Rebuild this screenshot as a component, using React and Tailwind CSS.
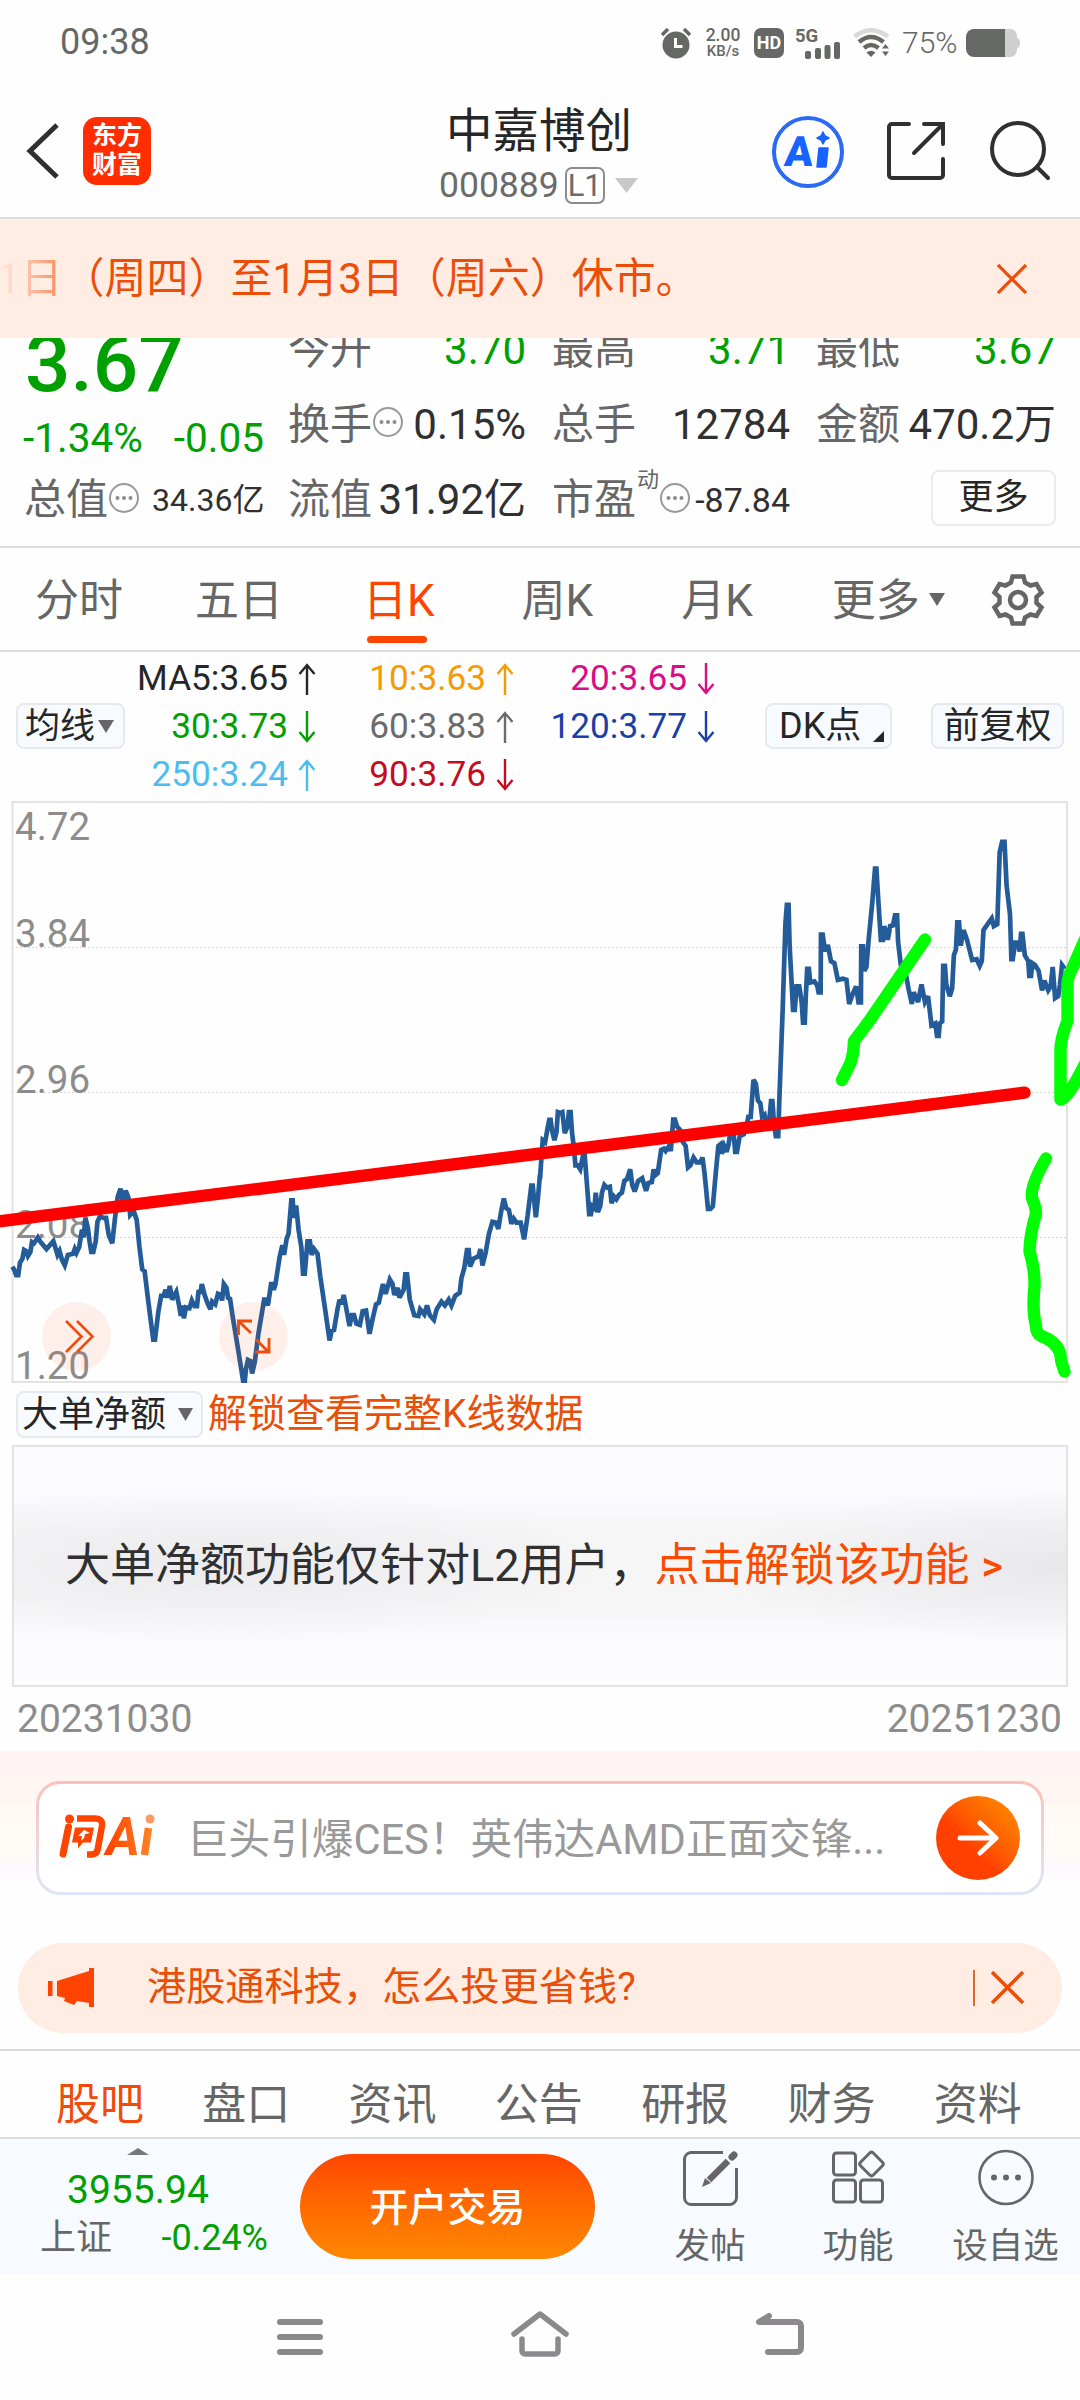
import React from 'react';

const quotes = [
    { label: '今开', value: '3.70', tone: 'text-[#00a000]' },
    { label: '最高', value: '3.71', tone: 'text-[#00a000]' },
    { label: '最低', value: '3.67', tone: 'text-[#00a000]' },
    { label: '换手', value: '0.15%', tone: 'text-[#303030]', hint: true },
    { label: '总手', value: '12784', tone: 'text-[#303030]' },
    { label: '金额', value: '470.2万', tone: 'text-[#303030]' },
    { label: '流值', value: '31.92亿', tone: 'text-[#303030]' }
];

const periods = [
    { label: '分时', space: 'ml-[35px]' },
    { label: '五日', space: 'ml-[72px]' },
    { label: '日K', space: 'ml-[80px]', active: true },
    { label: '周K', space: 'ml-[87px]' },
    { label: '月K', space: 'ml-[88px]' },
    { label: '更多', space: 'ml-[79px]' }
];

const averages = [
    { text: 'MA5:3.65', up: true, color: 'text-[#262626]' },
    { text: '10:3.63', up: true, color: 'text-[#f59a00]' },
    { text: '20:3.65', up: false, color: 'text-[#d90d86]' },
    { text: '30:3.73', up: false, color: 'text-[#00a000]' },
    { text: '60:3.83', up: true, color: 'text-[#6b6b6b]' },
    { text: '120:3.77', up: false, color: 'text-[#1a3fa8]' },
    { text: '250:3.24', up: true, color: 'text-[#4cbcf0]' },
    { text: '90:3.76', up: false, color: 'text-[#c60a20]' }
];

const axis = [
    { text: '4.72', y: 50 },
    { text: '3.84', y: 157 },
    { text: '2.96', y: 303 },
    { text: '2.08', y: 448 },
    { text: '1.20', y: 589 }
];

const sections = ['股吧', '盘口', '资讯', '公告', '研报', '财务', '资料'];

// Price line, first and second half of the period
const firstHalf = '36,1225 42,1235 47,1247 53,1247 58,1215 65,1205 70,1182 76,1185 81,1198 88,1188 93,1162 99,1165 110,1150 118,1162 135,1180 145,1170 155,1160 162,1180 167,1195 173,1185 180,1208 188,1222 197,1195 212,1192 217,1180 222,1190 230,1175 238,1130 243,1150 248,1100 255,1125 260,1160 265,1187 271,1187 278,1160 283,1110 291,1095 300,1100 308,1100 316,1145 326,1165 334,1100 342,1045 350,1025 358,1065 365,1030 373,1048 378,1092 388,1082 397,1105 405,1175 413,1232 420,1237 430,1310 445,1413 450,1413 460,1340 468,1300 475,1300 481,1285 487,1305 493,1275 500,1310 512,1290 520,1325 525,1352 529,1325 534,1358 540,1330 550,1332 557,1312 565,1327 572,1327 577,1285 582,1295 586,1270 595,1300 603,1320 611,1335 616,1315 625,1322 633,1295 640,1298 645,1312 650,1270 658,1280 662,1305 668,1308 675,1350 690,1430 706,1518 711,1518 714,1490 720,1465 727,1468 732,1500 740,1470 750,1400 767,1310 773,1310 778,1325 788,1265 795,1285 800,1270 812,1200 820,1170 825,1195 832,1155 838,1140 846,1055 850,1055 853,1100 860,1068 867,1130 875,1175 880,1243 885,1243 890,1190 893,1160 900,1160 905,1195 912,1180 922,1192 930,1250 945,1340 957,1415 963,1390 970,1388 980,1335 986,1310 992,1322 998,1298 1005,1330 1015,1378 1022,1350 1028,1350 1035,1372 1045,1375 1053,1340 1063,1338 1073,1398 1082,1360 1092,1322 1100,1318 1112,1270 1120,1295 1132,1258 1140,1270 1145,1298 1155,1280 1160,1305 1172,1285 1177,1245 1182,1245 1190,1310 1203,1350 1215,1352 1220,1335 1232,1348 1240,1325 1248,1350 1260,1362 1268,1335 1282,1315 1292,1325 1303,1310 1311,1325 1322,1300 1335,1292 1340,1255 1348,1230 1356,1183 1361,1183 1365,1225 1375,1205 1390,1198 1395,1180 1401,1222 1410,1190 1420,1140 1430,1110 1440,1112 1447,1128 1455,1085 1463,1050 1470,1075 1478,1080 1485,1115 1492,1102 1500,1112 1512,1112 1522,1155 1532,1095 1543,1017 1547,1017 1556,1098 1562,1050 1568,990';
const secondHalf = '0,1000 8,900 15,905 22,870 27,848 31,848 35,875 42,900 48,880 52,828 60,830 65,828 72,882 80,865 84,828 89,828 93,880 98,915 103,965 110,965 117,975 125,940 130,940 137,1020 143,1090 148,1090 152,1070 158,1075 162,1035 168,1085 175,1070 180,1035 187,1015 195,1022 203,1020 208,1062 215,1045 222,1052 230,1040 238,1035 245,1005 253,1000 262,975 268,1015 275,1032 285,1005 297,998 308,1030 315,1010 325,1008 330,975 335,990 342,985 352,925 360,922 365,928 375,915 380,928 387,847 392,847 398,865 408,875 415,905 423,915 430,970 437,965 446,945 455,957 465,957 472,945 478,985 488,1077 495,1077 502,1070 510,990 518,915 525,910 528,935 535,915 542,930 548,910 556,860 563,890 567,930 572,930 580,890 592,885 600,865 605,840 612,840 620,745 627,755 633,798 640,805 645,840 652,835 658,860 665,860 671,800 675,800 680,860 685,890 692,890 695,800 705,560 713,340 717,295 722,295 725,400 735,565 740,565 745,505 753,505 760,545 764,598 769,598 772,530 776,460 781,460 785,495 797,492 805,502 809,520 815,520 816,372 821,372 828,415 836,398 845,440 855,445 865,488 880,485 890,488 898,550 908,525 918,505 925,546 932,546 933,402 938,402 942,465 948,455 955,380 965,290 973,202 977,202 983,290 990,385 996,385 1000,350 1010,385 1017,350 1025,348 1031,322 1037,322 1040,390 1048,450 1060,460 1070,510 1080,550 1085,520 1098,545 1108,500 1118,545 1127,530 1137,605 1148,600 1153,632 1158,632 1161,600 1168,595 1171,452 1176,452 1180,500 1190,530 1197,510 1202,425 1208,410 1212,340 1217,340 1222,400 1230,360 1240,385 1255,437 1268,435 1277,452 1283,440 1288,360 1300,345 1312,330 1318,350 1328,345 1335,160 1342,133 1349,133 1355,245 1365,320 1369,435 1373,435 1380,392 1388,392 1393,415 1397,370 1401,370 1408,425 1418,440 1421,478 1426,478 1430,445 1438,450 1448,465 1458,515 1465,490 1476,515 1483,505 1489,455 1496,535 1505,530 1510,500 1516,450 1524,460';

const Arrow = ({ up }) => (
    <svg width="18" height="34" viewBox="0 0 18 34" fill="none" stroke="currentColor" strokeWidth="2.4" className={up ? '' : 'rotate-180'}>
        <path d="M9 33V3M1.5 12L9 3l7.500 9" />
    </svg>
);

const Triangle = ({ className }) => (
    <svg width="16" height="13" viewBox="0 0 16 13" preserveAspectRatio="none" className={className} fill="currentColor">
        <path d="M0 0h16L8 13z" />
    </svg>
);

const Hint = ({ className = '' }) => (
    <svg width="32" height="32" viewBox="0 0 32 32" fill="none" className={`shrink-0 ${className}`}>
        <circle cx="16" cy="16" r="14" stroke="#999" strokeWidth="2" />
        <g fill="#8c8c8c">
            <circle cx="9.500" cy="16" r="2" />
            <circle cx="16" cy="16" r="2" />
            <circle cx="22.500" cy="16" r="2" />
        </g>
    </svg>
);

const Cross = ({ size }) => (
    <svg width={size} height={size} viewBox="0 0 32 32" fill="none" stroke="#ec4e0a" strokeWidth="3.400">
        <path d="M1 1l30 30M31 1L1 31" />
    </svg>
);

const StatusBar = () => (
    <div className="h-[84px] pl-[60px] pr-[60px] flex items-center justify-between text-[#666865]">
        <span className="text-[36px] leading-none">09:38</span>
        <div className="flex items-center h-9 mt-[2px]">
            <svg width="30" height="32" viewBox="0 0 30 32" fill="none">
                <circle cx="15" cy="18" r="13.500" fill="#666865" />
                <path d="M1 8l6-6M29 8l-6-6" stroke="#666865" strokeWidth="3.500" />
                <path d="M14.500 11v8.500h7" stroke="#fff" strokeWidth="3" />
            </svg>
            <div className="ml-[13px] w-[38px] text-[17.500px] leading-[16px] font-medium text-center">
                <div>2.00</div>
                <div className="text-[15px]">KB/s</div>
            </div>
            <div className="ml-3 w-[30px] h-[30px] rounded-[7px] bg-[#666865] text-white text-[18px] font-bold leading-[30px] text-center">HD</div>
            <svg width="46" height="32" viewBox="0 0 46 32" className="ml-[11px] overflow-visible" fill="#666865">
                <text x="0" y="14.500" fontSize="18.500" fontWeight="700">5G</text>
                <rect x="10" y="24" width="6" height="8" rx="2" />
                <rect x="20" y="21" width="6" height="11" rx="2" />
                <rect x="29.500" y="18" width="6" height="14" rx="2" />
                <rect x="39" y="15" width="6" height="17" rx="2" />
            </svg>
            <svg width="38" height="30" viewBox="0 0 38 30" fill="none" className="ml-[12px]">
                <path d="M1.500 8.500Q18 -4 35 8.500" stroke="#d9d9d9" strokeWidth="4.500" />
                <path d="M6 14Q18 4 30.500 14" stroke="#666865" strokeWidth="4.500" />
                <path d="M11 20Q18 14 25.500 20" stroke="#666865" strokeWidth="4.500" />
                <path d="M13.500 24.500Q18 21 22.500 24.500L18 29z" fill="#666865" />
                <path d="M29 20.500l3.500-4.500 3.500 4.500zM29 23.500l3.500 4.500 3.500-4.500z" fill="#666865" />
            </svg>
            <span className="ml-[11px] w-[58px] text-[30px] leading-none font-light">75%</span>
            <svg width="54" height="28" viewBox="0 0 54 28" className="ml-[6px]">
                <path d="M8 0h37a7 7 0 0 1 6 7v2q3 0 3 5t-3 5v2a7 7 0 0 1-6 7H8z" fill="#cfcfcf" />
                <path d="M39 0H8a8 8 0 0 0-8 8v12a8 8 0 0 0 8 8h31z" fill="#666865" />
            </svg>
        </div>
    </div>
);

const Header = () => (
    <header className="h-[135px] border-b-2 border-[#dcdcdc] flex items-start">
        <svg width="33" height="56" viewBox="0 0 33 56" fill="none" stroke="#303030" strokeWidth="5" className="ml-[26px] mt-[39px]">
            <path d="M31 2L4 28l27 26" />
        </svg>
        <div className="ml-[24px] mt-[33px] w-[68px] h-[68px] rounded-[14px] bg-[#ff2d00] text-white text-[25px] leading-[29px] font-bold text-center pt-[4px]">
            <div>东方</div>
            <div>财富</div>
        </div>
        <div className="ml-[288px] mt-[24px] w-[200px]">
            <div className="text-[46.500px] leading-none text-[#262626] pl-[7px] whitespace-nowrap">中嘉博创</div>
            <div className="mt-[12.500px] flex items-center text-[35.500px] leading-none text-[#6b6b6b]">
                <span className="mr-[6px]">000889</span>
                <span className="w-[40px] h-[37px] rounded-[7px] border-2 border-[#8c8c8c] text-[31px] flex items-center justify-center shrink-0">L1</span>
                <Triangle className="ml-[10px] w-[23px] h-[15px] shrink-0 text-[#c8c8c8]" />
            </div>
        </div>
        <svg width="74" height="74" viewBox="0 0 74 74" className="ml-[132px] mt-[31px]">
            <circle cx="37" cy="37" r="34" fill="none" stroke="#2a6af5" strokeWidth="4" />
            <text x="13" y="51" fontSize="42" fontWeight="900" fill="#1763ff" transform="skewX(-5) translate(4 0)">A</text>
            <path d="M48 33h9l-2 19h-9zM52 17l2 4 4 2-4 2-2 4-2-4-4-2 4-2z" fill="#1763ff" stroke="#1763ff" strokeWidth="1.500" strokeLinejoin="round" />
        </svg>
        <svg width="60" height="60" viewBox="0 0 60 60" fill="none" stroke="#303030" strokeWidth="4" strokeLinecap="round" className="ml-[41px] mt-[37px]">
            <path d="M23 3H6a3 3 0 0 0-3 3v48a3 3 0 0 0 3 3h48a3 3 0 0 0 3-3V38M38 3h19v20M57 3L28 32" />
        </svg>
        <svg width="62" height="62" viewBox="0 0 62 62" fill="none" stroke="#303030" strokeWidth="4" strokeLinecap="round" className="ml-[43px] mt-[36px]">
            <circle cx="29" cy="29" r="26" />
            <path d="M48 47l11 11" />
        </svg>
    </header>
);

const Quote = () => (
    <section className="h-[210px] border-b-2 border-[#dcdcdc] overflow-hidden flex leading-none">
        <div className="w-[264px] ml-[23px] -mt-[14px] shrink-0">
            <div className="text-[80px] font-medium text-[#00a000] pl-[2px]">3.67</div>
            <div className="mt-[14px] flex justify-between text-[40.500px] text-[#00a000]">
                <span>-1.34%</span>
                <span className="mr-[23px]">-0.05</span>
            </div>
            <div className="mt-[20px] flex items-center text-[42px] text-[#666]">
                <span className="ml-[1px]">总值</span>
                <Hint className="-mt-1" />
                <span className="ml-3 text-[32px] text-[#303030]">34.36亿</span>
            </div>
        </div>
        <div className="ml-[1px] -mt-[26px] grid grid-cols-[238px_238px_240px] auto-rows-[75px] gap-x-[26px] text-[42px]">
            {quotes.map((item) => (
                <div key={item.label} className="flex items-center text-[#666] whitespace-nowrap">
                    <span>{item.label}</span>
                    {item.hint && <Hint className="-mt-[6px]" />}
                    <span className={`ml-auto ${item.tone}`}>{item.value}</span>
                </div>
            ))}
            <div className="flex items-center text-[#666]">
                <span>市盈</span>
                <span className="text-[22px] -mt-[39px] ml-[1px]">动</span>
                <Hint className="-mt-1" />
                <span className="ml-auto text-[34px] text-[#303030]">-87.84</span>
            </div>
            <div className="flex items-center justify-end">
                <span className="w-[125px] h-[56px] -mt-[4px] border-2 border-[#ebebee] rounded-lg text-[35px] text-[#262626] flex items-center justify-center">更多</span>
            </div>
        </div>
    </section>
);

const Periods = () => (
    <nav className="h-[104px] border-b-2 border-[#dcdcdc] flex items-center text-[44px] leading-none text-[#666]">
        {periods.map((item) => (
            <div key={item.label} className={`relative h-full flex items-center pt-[3px] ${item.space} ${item.active ? 'text-[#ff4400]' : ''}`}>
                {item.label}
                {item.active && <span className="absolute left-[4px] bottom-[7px] w-[60px] h-[7px] rounded-full bg-[#ff4400]" />}
            </div>
        ))}
        <Triangle className="ml-[9px]" />
        <svg width="56" height="56" viewBox="-28 -28 56 56" fill="none" stroke="#666" strokeWidth="4.500" className="ml-[45px] mt-[1px]">
            <circle r="8" />
            <path d="M-5.500 -23.500H5.500L7 -17.500L12.500 -14.500L18.500 -16L23.500 -7.500L18.500 -3V3L23.500 7.500L18.500 16L12.500 14.500L7 17.500L5.500 23.500H-5.500L-7 17.500L-12.500 14.500L-18.500 16L-23.500 7.500L-18.500 3V-3L-23.500 -7.500L-18.500 -16L-12.500 -14.500L-7 -17.500Z" />
        </svg>
    </nav>
);

const Averages = () => (
    <div className="h-[138px] flex items-center leading-none">
        <div className="ml-4 mt-[10px] w-[109px] h-[46px] shrink-0 bg-[#f7fbff] border-2 border-[#e6e9ee] rounded-lg flex items-center pl-[7px] text-[35px] text-[#262626]">
            均线
            <Triangle className="ml-[3px] text-[#666]" />
        </div>
        <div className="w-[590px] mt-[12px] grid grid-cols-[191px_198px_201px] auto-rows-[48px] text-[35.200px]">
            {averages.map((item) => (
                <div key={item.text} className={`flex items-center justify-end gap-[10px] ${item.color}`}>
                    <span>{item.text}</span>
                    <Arrow up={item.up} />
                </div>
            ))}
        </div>
        <div className="ml-[50px] mt-[10px] w-[127px] h-[46px] bg-[#f7fbff] border-2 border-[#e6e9ee] rounded-lg flex items-center pl-[12px] text-[36px] text-[#262626]">
            DK点
            <svg width="11" height="11" viewBox="0 0 11 11" className="ml-[12px] mt-5"><path d="M11 0v11H0z" fill="#262626" /></svg>
        </div>
        <div className="ml-[39px] mt-[10px] w-[133px] h-[46px] bg-[#f7fbff] border-2 border-[#e6e9ee] rounded-lg flex items-center justify-center text-[36px] text-[#262626] whitespace-nowrap">前复权</div>
    </div>
);

const Chart = () => (
    <svg width="1080" height="594" viewBox="0 0 1080 594" fill="none" className="block overflow-visible relative z-10">
        <rect x="12.500" y="12" width="1054.500" height="580" stroke="#e3e3e3" strokeWidth="2" />
        <path d="M12 157.500H1067M12 302.500H1067M12 447.500H1067" stroke="#d4d4d4" strokeWidth="1" strokeDasharray="2 2" />
        {axis.map((item) => (
            <text key={item.text} x="15" y={item.y} fontSize="38.500" fill="#8c8c8c">{item.text}</text>
        ))}
        <g transform="scale(0.34436 0.38903)">
            <g stroke="#235c99" strokeWidth="4.700" strokeLinejoin="miter" strokeMiterlimit="3">
                <polyline points={firstHalf} vectorEffect="non-scaling-stroke" />
                <polyline points={secondHalf} transform="translate(1568 0)" vectorEffect="non-scaling-stroke" />
            </g>
        </g>
        {/* chart buttons */}
        <circle cx="76.500" cy="546.500" r="34.500" fill="#ff4400" fillOpacity="0.08" />
        <circle cx="253.500" cy="546.500" r="34.500" fill="#ff4400" fillOpacity="0.08" />
        <path d="M66 531l15.500 15.500L66 562M77 531l15.500 15.500L77 562" stroke="#f04b0a" strokeWidth="2.600" />
        <path d="M238.500 545v-14H252M239 531.500l12 11.500M269 548v14h-14M268 561.500l-12-12" stroke="#f04b0a" strokeWidth="2.800" />
        {/* hand drawn lines */}
        <path d="M-6 432L1024.500 302.700" stroke="#ff0000" strokeWidth="12.400" strokeLinecap="round" />
        <g stroke="#00ff00" strokeWidth="12.400" strokeLinecap="round" strokeLinejoin="round">
            <path d="M925 149.500L874 224Q866 236 854 251Q853.500 266 850 274L842 290" />
            <path d="M1085 149.500L1072 179Q1067 188 1067.500 196V231Q1060 250 1060.500 262V309.500Q1067 310 1085 274" />
            <path d="M1046 368.500Q1030 396 1032 408Q1036 417 1036 424Q1030 443 1029.500 461Q1035 480 1034.500 496Q1032 520 1036 536Q1036 543 1041 546Q1056 551 1060 563Q1061 573 1064.500 581.500" />
        </g>
    </svg>
);

const MoneyFlow = () => (
    <section className="leading-none">
        <div className="h-[61px] flex items-center pl-4">
            <div className="w-[187px] h-[47px] bg-[#f7fbff] border-2 border-[#e6e9ee] rounded-lg flex items-center pl-[4px] text-[36px] text-[#262626]">
                大单净额
                <Triangle className="ml-[12px] text-[#666] w-[15px]" />
            </div>
            <span className="ml-[5px] text-[39px] text-[#e8500a]">解锁查看完整K线数据</span>
        </div>
        <div className="ml-3 w-[1056px] h-[242px] border-2 border-[#e3e3e3] bg-[#fcfbfd] bg-[radial-gradient(ellipse_38%_32%_at_20%_50%,#ebebed,transparent),radial-gradient(ellipse_35%_32%_at_100%_50%,#e8e8ea,transparent),linear-gradient(to_bottom,#fcfbfd_16%,#f6f6f7_34%,#f6f6f7_66%,#fcfbfd_84%)] flex items-center pl-[51px] pb-[2px] text-[45px] whitespace-nowrap text-[#303030]">
            大单净额功能仅针对L2用户，
            <span className="text-[#fa4a04]">点击解锁该功能</span>
            <span className="text-[#fa4a04] ml-[12px] mt-[2px] text-[41px] font-medium">&gt;</span>
        </div>
        <div className="h-[64px] pl-[17px] pr-[18px] pt-[1px] flex items-center justify-between text-[39px] text-[#8c8c8c]">
            <span>20231030</span>
            <span>20251230</span>
        </div>
    </section>
);

const AskAi = () => (
    <section className="h-[192px] pt-[30px] bg-[linear-gradient(to_bottom,#fff4f3_0,#fff6f4_50px,#fffaf5_56px,#fffbf6_100px,#fdf9fd_118px,#fefefe_132px)]">
        <div className="mx-[36px] h-[114px] p-[3px] rounded-[24px] bg-linear-to-b from-[#fbc0b8] to-[#dce6f8]">
            <div className="h-full rounded-[21px] bg-white flex items-center">
                <svg width="100" height="48" viewBox="0 0 100 48" fill="none" className="ml-[18px] -mt-[2px]">
                    <defs>
                        <linearGradient id="ask" x1="0" y1="0" x2="100" y2="0" gradientUnits="userSpaceOnUse">
                            <stop offset="0.500" stopColor="#ff4400" />
                            <stop offset="1" stopColor="#ff8a2a" />
                        </linearGradient>
                    </defs>
                    <circle cx="12.500" cy="6" r="4.500" fill="#ff4400" />
                    <path d="M11.500 14L6 41" stroke="#ff4400" strokeWidth="7" strokeLinecap="round" />
                    <path d="M20 5.500h18q8 0 7 7.500l-4.500 24q-1 4.500-6 4.500h-4.500" stroke="#ff4400" strokeWidth="6.500" />
                    <path d="M18 14.500h19l-3 15h-8l-5 6v-6h-6z" fill="#ff4400" />
                    <path d="M24 28l1-5h-4l6-6 6 3-5 1-1 4z" fill="#fff" />
                    <text x="49" y="42" fontSize="53" fontWeight="700" fontStyle="italic" fill="url(#ask)" textLength="34" lengthAdjust="spacingAndGlyphs">A</text>
                    <path d="M91.500 15L87.500 42" stroke="url(#ask)" strokeWidth="7.500" />
                    <circle cx="93" cy="6" r="4.500" fill="#ff9a60" />
                </svg>
                <span className="ml-[30px] mt-[4px] text-[41.600px] leading-none text-[#999] whitespace-nowrap">巨头引爆CES！英伟达AMD正面交锋...</span>
                <div className="ml-auto mr-[21px] w-[84px] h-[84px] rounded-full bg-linear-to-tr from-[#ff4000] from-40% to-[#ff9000] flex items-center justify-center shrink-0">
                    <svg width="42" height="36" viewBox="0 0 42 36" fill="none" stroke="#fff" strokeWidth="5" strokeLinecap="round" strokeLinejoin="round">
                        <path d="M3 18h36M23 3l16 15-16 15" />
                    </svg>
                </div>
            </div>
        </div>
    </section>
);

const Promo = () => (
    <div className="mx-[18px] h-[90px] rounded-full bg-[#ffede4] flex items-center leading-none">
        <svg width="46" height="40" viewBox="0 0 46 40" fill="#ff4400" className="ml-[30px]">
            <path d="M0 13h4.500v15H0zM9 13L41 3V0h5v39h-5v-4l-12-2-3 4-10-4 1-3-8-2z" />
        </svg>
        <span className="ml-[53px] text-[39.200px] text-[#e8500a]">港股通科技，怎么投更省钱?</span>
        <span className="ml-auto mr-[16px] -mt-[1px] w-[2px] h-[36px] bg-[#d9692f]" />
        <div className="mr-[38px] -mt-[2px]"><Cross size={33} /></div>
    </div>
);

const Sections = () => (
    <nav className="mt-[16px] h-[90px] border-y-2 border-[#dcdcdc] flex pl-[56px] pt-[31.500px] text-[44px] leading-none text-[#666]">
        {sections.map((name, index) => (
            <span key={name} className={`w-[146.500px] ${index === 0 ? 'text-[#f04b0a]' : ''}`}>{name}</span>
        ))}
    </nav>
);

const TradeBar = () => (
    <div className="h-[135px] bg-[#f7fbff] flex leading-none text-[#666]">
        <div className="w-[276px]">
            <Triangle className="rotate-180 ml-[127px] mt-[9px] w-[22px] h-[7px] text-[#777]" />
            <div className="mt-[16px] pl-[67px] text-[39px] text-[#00a000]">3955.94</div>
            <div className="mt-[10px] pl-[40px] flex items-center justify-between text-[36px]">
                <span>上证</span>
                <span className="mr-[8px] text-[#00a000]">-0.24%</span>
            </div>
        </div>
        <div className="ml-[24px] mt-[15px] w-[295px] h-[105px] rounded-full bg-linear-to-b from-[#ff4400] to-[#ff8800] text-white text-[39px] font-medium flex items-center justify-center pt-[3px]">开户交易</div>
        <div className="ml-[69px] pt-[10px] w-[92px] flex flex-col items-center text-[35.500px] whitespace-nowrap">
            <svg width="58" height="58" viewBox="0 0 58 58" fill="none" stroke="#666" strokeWidth="3">
                <path d="M42 3.500H10A7 7 0 0 0 3.500 10v39A7 7 0 0 0 10 55.500h39a7 7 0 0 0 6.500-7V19" />
                <path d="M28 31L47 12" strokeWidth="6.500" />
                <path d="M21 38l3-9 6 5z" fill="#666" stroke="none" />
                <path d="M51 8l2-2" strokeWidth="7" strokeLinecap="round" />
            </svg>
            <span className="mt-[22px]">发帖</span>
        </div>
        <div className="ml-[56px] pt-[10px] w-[92px] flex flex-col items-center text-[35.500px] whitespace-nowrap">
            <svg width="58" height="58" viewBox="0 0 58 58" fill="none" stroke="#666" strokeWidth="3">
                <rect x="4.500" y="4" width="22" height="22" rx="3" />
                <rect x="4.500" y="31" width="22" height="22" rx="3" />
                <rect x="31.500" y="31" width="22" height="22" rx="3" />
                <rect x="33.500" y="6" width="18" height="18" rx="2.500" transform="rotate(45 42.500 15)" />
            </svg>
            <span className="mt-[22px]">功能</span>
        </div>
        <div className="ml-[46.500px] pt-[10px] w-[110px] flex flex-col items-center text-[35.500px] whitespace-nowrap">
            <svg width="58" height="58" viewBox="0 0 58 58" fill="#666">
                <circle cx="29" cy="28.500" r="26.500" fill="none" stroke="#666" strokeWidth="2.600" />
                <circle cx="17" cy="28.500" r="3" />
                <circle cx="29" cy="28.500" r="3" />
                <circle cx="41" cy="28.500" r="3" />
            </svg>
            <span className="mt-[22px]">设自选</span>
        </div>
    </div>
);

const SystemNav = () => (
    <div className="h-[125px] pt-[35px] pl-[275px] flex text-[#8b898c]">
        <svg width="50" height="50" viewBox="0 0 50 50" fill="none" stroke="currentColor" strokeWidth="6" strokeLinecap="round">
            <path d="M5 13h40M5 28h40M5 43h40" />
        </svg>
        <svg width="62" height="50" viewBox="0 0 62 50" fill="none" stroke="currentColor" strokeWidth="5.500" strokeLinecap="round" strokeLinejoin="round" className="ml-[184px]">
            <path d="M5 25L31 5l26 20M13 30v12a3 3 0 0 0 3 3h30a3 3 0 0 0 3-3V30" />
        </svg>
        <svg width="52" height="50" viewBox="0 0 52 50" fill="none" stroke="currentColor" strokeWidth="6" strokeLinecap="round" strokeLinejoin="round" className="ml-[184px]">
            <path d="M14 7L4 13h38a4 4 0 0 1 4 4v22a4 4 0 0 1-4 4H13" />
        </svg>
    </div>
);

const App = () => {
    return (
        <div className="w-[1080px] h-[2400px] overflow-hidden bg-[#fefefe] font-[Roboto,'Noto_Sans_CJK_SC',sans-serif]">
            <StatusBar />
            <Header />
            <div className="h-[119px] bg-[#ffede4] flex items-center justify-between pr-[53px] text-[42px] leading-none text-[#ec4e0a]">
                <div className="whitespace-nowrap -ml-[3px]">
                    <span className="bg-linear-to-r from-[#ffede4] to-[#f58a5c] bg-clip-text text-transparent">1日</span>
                    （周四）至1月3日（周六）休市。
                </div>
                <Cross size={30} />
            </div>
            <Quote />
            <Periods />
            <Averages />
            <Chart />
            <MoneyFlow />
            <AskAi />
            <Promo />
            <Sections />
            <TradeBar />
            <SystemNav />
        </div>
    );
};

export default App;
